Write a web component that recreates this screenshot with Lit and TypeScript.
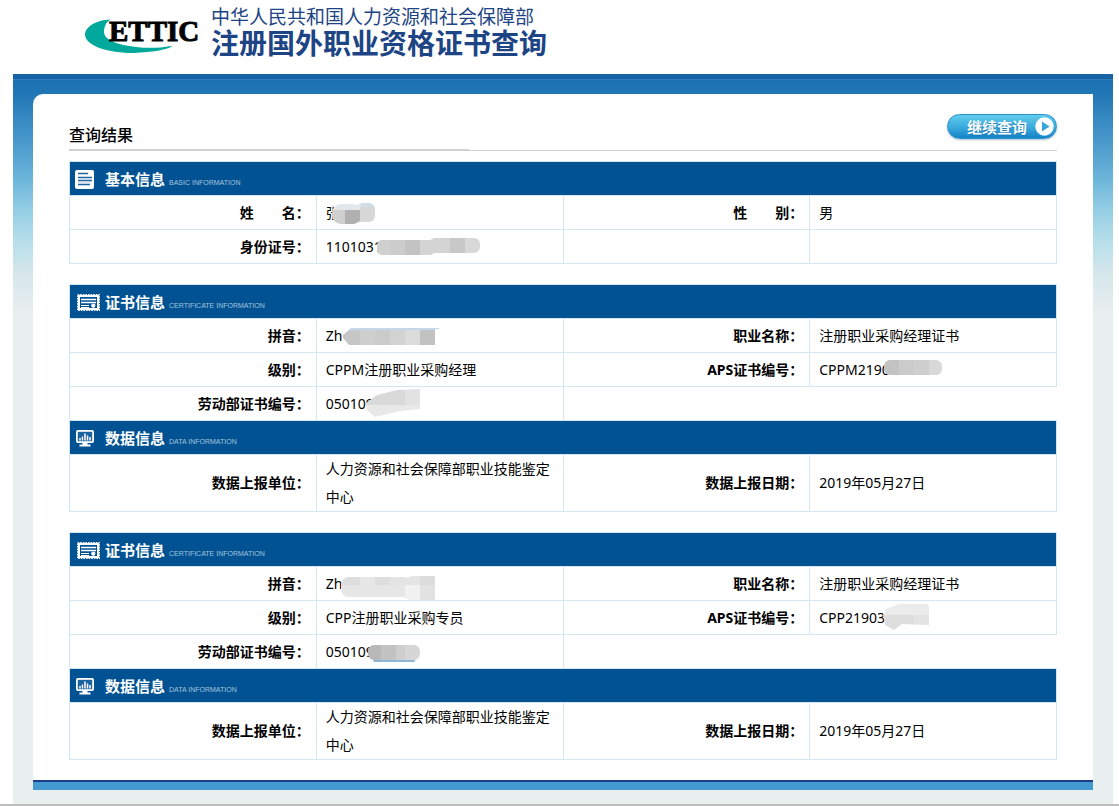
import { LitElement, html, svg, css, nothing, TemplateResult, SVGTemplateResult } from "lit";
import { customElement, property } from "lit/decorators.js";

type Tile = [x: number, y: number, w: number, h: number, fill: string];

interface Mask {
  outline: string;
  tiles: Tile[];
}

interface Field {
  label: string;
  value?: string;
  mask?: Mask;
}

interface Section {
  icon: "document" | "certificate" | "chart";
  title: string;
  english: string;
  rows: Field[][];
}

/* Outline of a rounded block, used to cut out the masking tiles. */
const block = (x: number, y: number, w: number, h: number, r: number) =>
  `M${x + r} ${y}h${w - 2 * r}a${r} ${r} 0 0 1 ${r} ${r}v${h - 2 * r}a${r} ${r} 0 0 1 ${-r} ${r}h${2 * r - w}a${r} ${r} 0 0 1 ${-r} ${-r}v${2 * r - h}a${r} ${r} 0 0 1 ${r} ${-r}z`;

const masks: Record<string, Mask> = {
  name: {
    outline: block(6, 5, 30, 20, 9) + block(30, 4, 19, 19, 6),
    tiles: [
      [6, 4, 30, 7, "#e4e7e9"],
      [35, 4, 14, 4, "#d0dde8"],
      [6, 11, 13, 14, "#cfcfcf"],
      [19, 11, 15, 14, "#b0b0b0"],
      [34, 8, 15, 17, "#d7d7d7"],
    ],
  },
  identity: {
    outline: block(51, 7, 58, 15, 5) + block(103, 5, 51, 15, 6),
    tiles: [
      [51, 5, 13, 17, "#d0d0d0"],
      [64, 5, 15, 17, "#cccccc"],
      [79, 5, 15, 17, "#c3c3c3"],
      [94, 5, 30, 17, "#d4d4d4"],
      [124, 5, 15, 17, "#c8c8c8"],
      [139, 5, 15, 17, "#d8d8d8"],
    ],
  },
  pinyinA: {
    outline: "M25 6h88v1h-4v16h-86l-6-7v-3z",
    tiles: [
      [17, 6, 96, 2, "#c3d8ea"],
      [17, 8, 17, 15, "#c6c6c6"],
      [34, 8, 15, 15, "#cfcfcf"],
      [49, 8, 15, 15, "#cbcbcb"],
      [64, 8, 15, 15, "#d3d3d3"],
      [79, 8, 15, 15, "#dcdcdc"],
      [94, 8, 15, 15, "#c2c2c2"],
    ],
  },
  labourA: {
    outline: "M40 13L51 5L71 0L94-1V19L74 21L49 27L41 20z",
    tiles: [
      [40, -1, 39, 16, "#d9d9d9"],
      [79, -1, 15, 16, "#e2e2e2"],
      [40, 15, 54, 12, "#e8e8e8"],
    ],
  },
  apsA: {
    outline: block(65, 4, 58, 15, 6),
    tiles: [
      [65, 4, 15, 15, "#c3c3c3"],
      [80, 4, 15, 15, "#cbcbcb"],
      [95, 4, 15, 15, "#cecece"],
      [110, 4, 13, 15, "#d8d8d8"],
    ],
  },
  pinyinB: {
    outline: block(15, 7, 70, 20, 8) + "M76 9L86 6H109V30H84L76 27z",
    tiles: [
      [15, 6, 19, 9, "#dedede"],
      [34, 6, 15, 9, "#e7e7e7"],
      [49, 6, 15, 9, "#dedede"],
      [64, 6, 30, 9, "#e4e4e4"],
      [94, 6, 15, 9, "#dcdcdc"],
      [15, 15, 64, 15, "#e6e6e6"],
      [79, 15, 15, 15, "#f1f1f1"],
      [94, 15, 15, 15, "#e2e2e2"],
    ],
  },
  labourB: {
    outline: block(42, 7, 52, 15, 6) + "M46 20H91L88 24H48z",
    tiles: [
      [42, 7, 13, 15, "#b8b8b8"],
      [55, 7, 15, 15, "#c2c2c2"],
      [70, 7, 15, 15, "#cecece"],
      [79, 7, 15, 15, "#d6d6d6"],
      [42, 22, 52, 2, "#8db7d8"],
    ],
  },
  apsB: {
    outline: "M64 11L67 5L80 0H108L110 2V21L83 20L75 26L66 21z",
    tiles: [
      [64, 0, 46, 11, "#ebebec"],
      [64, 11, 31, 15, "#dedede"],
      [95, 11, 15, 15, "#e3e3e3"],
    ],
  },
};

const report = (): Field[][] => [
  [
    { label: "数据上报单位", value: "人力资源和社会保障部职业技能鉴定中心" },
    { label: "数据上报日期", value: "2019年05月27日" },
  ],
];

const tables: Section[][] = [
  [
    {
      icon: "document",
      title: "基本信息",
      english: "BASIC INFORMATION",
      rows: [
        [
          { label: "姓\u3000\u3000名", value: "张", mask: masks.name },
          { label: "性\u3000\u3000别", value: "男" },
        ],
        [{ label: "身份证号", value: "1101031", mask: masks.identity }, { label: "" }],
      ],
    },
  ],
  [
    {
      icon: "certificate",
      title: "证书信息",
      english: "CERTIFICATE INFORMATION",
      rows: [
        [
          { label: "拼音", value: "Zh", mask: masks.pinyinA },
          { label: "职业名称", value: "注册职业采购经理证书" },
        ],
        [
          { label: "级别", value: "CPPM注册职业采购经理" },
          { label: "APS证书编号", value: "CPPM2190", mask: masks.apsA },
        ],
        [{ label: "劳动部证书编号", value: "050109", mask: masks.labourA }],
      ],
    },
    { icon: "chart", title: "数据信息", english: "DATA INFORMATION", rows: report() },
  ],
  [
    {
      icon: "certificate",
      title: "证书信息",
      english: "CERTIFICATE INFORMATION",
      rows: [
        [
          { label: "拼音", value: "Zh", mask: masks.pinyinB },
          { label: "职业名称", value: "注册职业采购经理证书" },
        ],
        [
          { label: "级别", value: "CPP注册职业采购专员" },
          { label: "APS证书编号", value: "CPP21903", mask: masks.apsB },
        ],
        [{ label: "劳动部证书编号", value: "050109", mask: masks.labourB }],
      ],
    },
    { icon: "chart", title: "数据信息", english: "DATA INFORMATION", rows: report() },
  ],
];

const icons: Record<Section["icon"], SVGTemplateResult> = {
  document: svg`
    <rect x="0" y="1" width="19" height="19" rx="2" fill="#fff"/>
    <path d="M3 4.500h10M3 8.500h14M3 11.500h14M3 15.500h12" stroke="#1f66a0" stroke-width="1.4"/>
    <path d="M3 13.500h13" stroke="#b9d0e3" stroke-width=".6"/>`,
  certificate: svg`
    <rect x="2.600" y="2.600" width="21.800" height="15.800" fill="none" stroke="#fff" stroke-width="1.2" stroke-dasharray="1.6 1"/>
    <rect x="4" y="4" width="19" height="13" fill="none" stroke="#fff" stroke-width="2"/>
    <path d="M6 7.500h15M6 10.500h15" stroke="#fff" stroke-width="1.6"/>
    <path d="M6 13.500h8M6 15.500h8" stroke="#fff" stroke-width="1.1"/>
    <circle cx="18.300" cy="13.700" r="2.100" fill="#fff"/>`,
  chart: svg`
    <rect x="1" y="2" width="18" height="13" rx="2" fill="#fff"/>
    <rect x="2.800" y="3.800" width="14.400" height="9.400" fill="#1a62a0"/>
    <path d="M5 12.500v-2.500M7.500 12.500v-4M10 12.500v-7M12.500 12.500v-5M15 12.500v-3.500" stroke="#fff" stroke-width="1.5"/>
    <path d="M7.500 15h5v1.500h3v2h-11v-2h3z" fill="#fff"/>`,
};

@customElement("info-table")
export class InfoTable extends LitElement {
  @property({ attribute: false }) sections: Section[] = [];

  static styles = css`
    :host {
      display: block;
    }
    .table {
      width: 100%;
      table-layout: fixed;
      border-collapse: collapse;
      font-size: 14px;
      line-height: 28px;
      color: #000;
    }
    .bar {
      height: 33px;
      padding: 0;
      border: 1px solid #d2e7ef;
      background: #005293;
      text-align: left;
    }
    .heading {
      display: flex;
      align-items: center;
      gap: 4px;
      height: 33px;
      padding-left: 5px;
      color: #fff;
    }
    .icon {
      flex: none;
      width: 26px;
      height: 21px;
      padding-top: 2px;
    }
    .title {
      font-size: 15px;
      line-height: 20px;
    }
    .english {
      font: 400 7px/10px "Liberation Sans", sans-serif;
      color: #a9c4dc;
      padding-top: 8px;
      white-space: nowrap;
    }
    .label,
    .cell {
      height: 34px;
      box-sizing: border-box;
      border: 1px solid #d2e7ef;
    }
    .label {
      padding: 0 6px 0 0;
      text-align: right;
      font-weight: 700;
    }
    .cell {
      padding: 0 9px;
    }
    .value {
      display: block;
      position: relative;
    }
    .mask {
      position: absolute;
      left: 0;
      top: 0;
      width: 180px;
      height: 34px;
      overflow: visible;
    }
  `;

  private renderMask(mask: Mask, id: string) {
    return html`<svg class="mask" viewBox="0 0 180 34" aria-hidden="true">
      <clipPath id=${id}><path d=${mask.outline} /></clipPath>
      <g clip-path="url(#${id})" shape-rendering="crispEdges">
        ${mask.tiles.map(([x, y, w, h, fill]) => svg`<rect x=${x} y=${y} width=${w} height=${h} fill=${fill} />`)}
      </g>
    </svg>`;
  }

  private renderField(field: Field, id: string): TemplateResult {
    if (!field.label) return html`<td class="cell"></td><td class="cell"></td>`;
    return html`<th class="label" scope="row">${field.label}：</th>
      <td class="cell">
        <span class="value">${field.value}${field.mask ? this.renderMask(field.mask, id) : nothing}</span>
      </td>`;
  }

  render() {
    return html`<table class="table">
      <colgroup><col /><col /><col /><col /></colgroup>
      ${this.sections.map(
        (section, s) => html`<tbody>
          <tr>
            <th class="bar" colspan="4" scope="rowgroup">
              <div class="heading">
                <svg class="icon" viewBox="0 0 26 21" aria-hidden="true">${icons[section.icon]}</svg>
                <span class="title">${section.title}</span>
                <span class="english">${section.english}</span>
              </div>
            </th>
          </tr>
          ${section.rows.map(
            (row, r) => html`<tr>
              ${row.map((field, f) => this.renderField(field, `mask-${s}-${r}-${f}`))}
            </tr>`
          )}
        </tbody>`
      )}
    </table>`;
  }
}

@customElement("app-root")
export class AppRoot extends LitElement {
  static styles = css`
    :host {
      display: block;
      background: #fff;
      font-family: "Noto Sans", "Noto Sans CJK SC", sans-serif;
      border-bottom: 2px solid #bdbdbd;
    }
    .header {
      display: flex;
      align-items: flex-start;
      gap: 11px;
      height: 67px;
      padding: 7px 20px 0 84px;
      color: #1d4485;
      font-family: "Liberation Sans", "Noto Sans CJK SC", sans-serif;
    }
    .logo {
      flex: none;
      width: 116px;
      height: 50px;
    }
    .wordmark {
      font: 700 29px "Liberation Serif", serif;
    }
    .ministry {
      margin: 0;
      font-size: 19px;
      line-height: 22px;
      font-weight: 400;
      white-space: nowrap;
    }
    .site {
      margin: 0;
      font-size: 28px;
      line-height: 32px;
      font-weight: 700;
      white-space: nowrap;
    }
    .frame {
      margin: 0 6px 0 13px;
      padding: 20px 20px 14px;
      background: linear-gradient(
        #1763a4 0,
        #1763a4 5px,
        #2f7dbd 5px,
        #2f7dbd 6px,
        #1a70b1 6px,
        #2177b5 20px,
        #4797cb 65px,
        #6cb5da 105px,
        #93cde4 135px,
        #b9e0ea 170px,
        #d6e7eb 200px,
        #e9eeef 240px
      );
    }
    .panel {
      padding: 20px 36px;
      background: #fff;
      border-radius: 10px 0 0 0;
    }
    .top {
      display: flex;
      justify-content: space-between;
      align-items: flex-start;
      height: 36px;
      border-bottom: 1px solid #d0d0d0;
    }
    .result {
      align-self: stretch;
      box-sizing: border-box;
      width: 400px;
      margin: 0;
      padding-top: 10px;
      border-bottom: 1px solid #d0d0d0;
      font-size: 16px;
      line-height: 22px;
      font-weight: 500;
      color: #000;
    }
    .again {
      display: flex;
      align-items: center;
      justify-content: flex-end;
      gap: 8px;
      width: 110px;
      height: 25px;
      padding: 0 2px 0 0;
      border: 1px solid #2b93cc;
      border-radius: 13px;
      background: linear-gradient(#62cdec, #38a9dc 55%, #1483c8);
      box-shadow: 0 1px 2px rgba(0, 60, 110, 0.3);
      color: #fff;
      font: 700 15px/20px "Noto Sans", "Noto Sans CJK SC", sans-serif;
      text-shadow: 0 1px 1px #1a76b4;
      cursor: pointer;
    }
    .play {
      flex: none;
      width: 19px;
      height: 19px;
    }
    .tables {
      display: grid;
      gap: 20px;
      padding-top: 10px;
    }
    .foot {
      height: 8px;
      border-top: 2px solid #1b3f87;
      background: #449ad0;
    }
  `;

  render() {
    return html`
      <header class="header">
        <svg class="logo" viewBox="84 7 116 50" role="img" aria-label="ETTIC">
          <path
            d="M110 19.500C98 20 85 26 85 35C86 46 108 53 134 53C153 52 166 50 172 46.500L171 46C160 48 148 48.500 136 47C118 45 104 40 104 32C104 27 106 22 110 20z"
            fill="#00a99c"
          />
          <text class="wordmark" x="109" y="41" fill="#000" stroke="#000" stroke-width="1">ETTIC</text>
        </svg>
        <div>
          <p class="ministry">中华人民共和国人力资源和社会保障部</p>
          <h1 class="site">注册国外职业资格证书查询</h1>
        </div>
      </header>
      <main class="frame">
        <div class="panel">
          <div class="top">
            <h2 class="result">查询结果</h2>
            <button class="again" type="button">
              继续查询
              <svg class="play" viewBox="0 0 19 19" aria-hidden="true">
                <circle cx="9.500" cy="9.500" r="9.200" fill="#fff" />
                <path d="M7 4.500L14.500 9.500L7 14.500z" fill="#3aa3d8" />
              </svg>
            </button>
          </div>
          <div class="tables">
            ${tables.map((sections) => html`<info-table .sections=${sections}></info-table>`)}
          </div>
        </div>
        <div class="foot"></div>
      </main>
    `;
  }
}
